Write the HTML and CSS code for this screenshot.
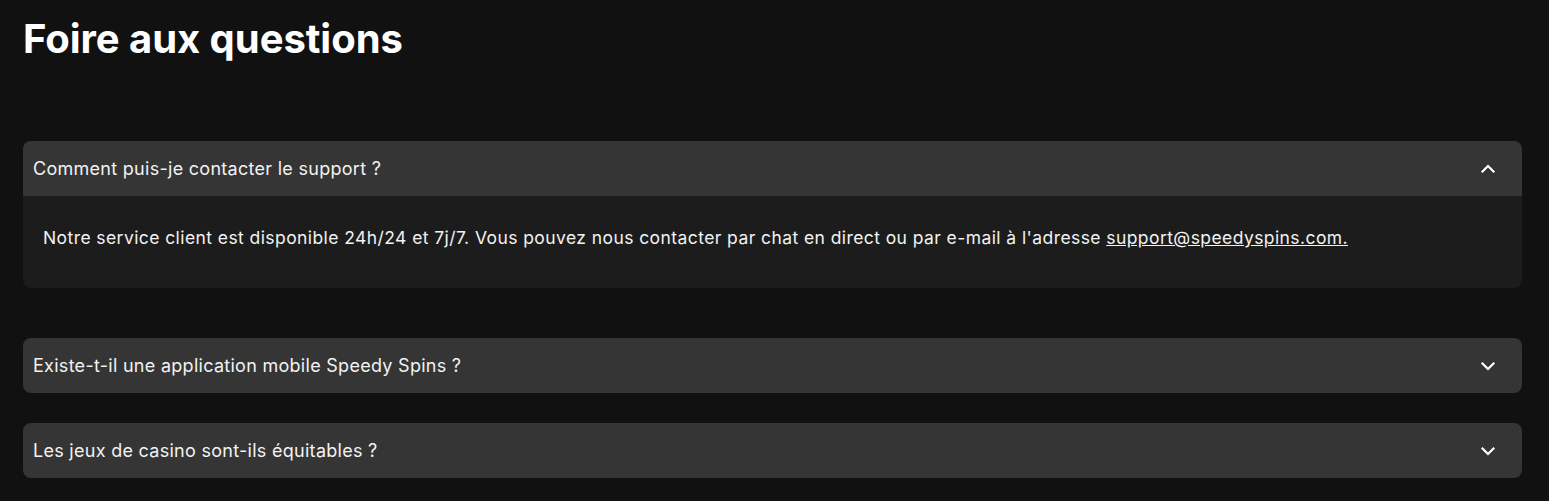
FILE: index.html
```html
<!DOCTYPE html>
<html lang="fr">
<head>
<meta charset="utf-8">
<title>FAQ</title>
<link rel="stylesheet" href="styles.css">
</head>
<body>
<main class="faq">
  <h1 class="faq-title">Foire aux questions</h1>
  <div class="faq-list">
    <div class="faq-item open">
      <div class="faq-q">
        <span>Comment puis-je contacter le support ?</span>
        <svg class="chev" width="16" height="16" viewBox="0 0 16 16"><path d="M2.5 10.5 8 5l5.5 5.5" fill="none" stroke="#fff" stroke-width="2.2" stroke-linecap="square"/></svg>
      </div>
      <div class="faq-a">Notre service client est disponible 24h/24 et 7j/7. Vous pouvez nous contacter par chat en direct ou par e-mail à l'adresse <a href="#" class="mail">support@speedyspins.com.</a></div>
    </div>
    <div class="faq-item">
      <div class="faq-q">
        <span>Existe-t-il une application mobile Speedy Spins ?</span>
        <svg class="chev" width="16" height="16" viewBox="0 0 16 16"><path d="M2.5 5.5 8 11l5.5-5.5" fill="none" stroke="#fff" stroke-width="2.2" stroke-linecap="square"/></svg>
      </div>
    </div>
    <div class="faq-item">
      <div class="faq-q">
        <span>Les jeux de casino sont-ils équitables ?</span>
        <svg class="chev" width="16" height="16" viewBox="0 0 16 16"><path d="M2.5 5.5 8 11l5.5-5.5" fill="none" stroke="#fff" stroke-width="2.2" stroke-linecap="square"/></svg>
      </div>
    </div>
  </div>
</main>
</body>
</html>
```

FILE: styles.css
```css
html, body {
  margin: 0;
  padding: 0;
  background: #111111;
}
body {
  font-family: Inter, "Noto Sans", sans-serif;
  color: #ffffff;
}
.faq {
  padding: 0 27px 0 23px;
}
.faq-title {
  margin: 0;
  padding-top: 14px;
  font-size: 40px;
  line-height: 50px;
  font-weight: 700;
  letter-spacing: -0.05px;
}
.faq-list {
  margin-top: 77px;
  display: flex;
  flex-direction: column;
  gap: 30px;
}
.faq-item {
  border-radius: 8px;
  overflow: hidden;
  background: #1c1c1c;
}
.faq-item.open {
  margin-bottom: 20px;
}
.faq-q {
  height: 55px;
  background: #353535;
  display: flex;
  align-items: center;
  justify-content: space-between;
  padding: 0 26px 0 10px;
  font-size: 18px;
  letter-spacing: 0.28px;
  color: #f2f2f2;
}
.chev {
  display: block;
}
.faq-a {
  padding: 31px 20px 40px 20px;
  font-size: 17.5px;
  line-height: 21px;
  letter-spacing: 0.42px;
  color: #f2f2f2;
}
.mail {
  color: #f2f2f2;
  text-decoration: underline;
}
```
